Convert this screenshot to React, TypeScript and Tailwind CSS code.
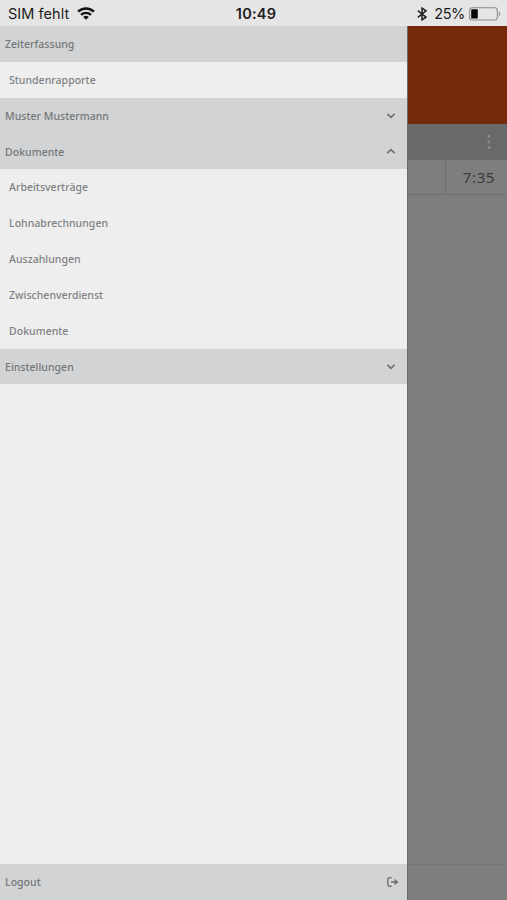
import { useState } from "react";

type Section = {
  id: string;
  label: string;
  collapsible?: boolean;
  items: string[];
};

const SECTIONS: Section[] = [
  { id: "time", label: "Zeiterfassung", items: ["Stundenrapporte"] },
  { id: "profile", label: "Muster Mustermann", collapsible: true, items: [] },
  {
    id: "documents",
    label: "Dokumente",
    collapsible: true,
    items: [
      "Arbeitsverträge",
      "Lohnabrechnungen",
      "Auszahlungen",
      "Zwischenverdienst",
      "Dokumente",
    ],
  },
  { id: "settings", label: "Einstellungen", collapsible: true, items: [] },
];

function WifiIcon() {
  return (
    <svg className="ml-[7.5px] h-[13px] w-[18px]" viewBox="0 0 18 13" fill="none" stroke="#111" aria-hidden>
      <path d="M1.1 4.7a11.4 11.4 0 0 1 15.8 0" strokeWidth="2.5" />
      <path d="M4 7.9a7.3 7.3 0 0 1 10 0" strokeWidth="2.4" />
      <path d="M9 12.8 6.2 10a4 4 0 0 1 5.6 0z" fill="#111" stroke="none" />
    </svg>
  );
}

function BluetoothIcon() {
  return (
    <svg className="h-[14px] w-[10px]" viewBox="0 0 10 14" fill="none" stroke="#222" strokeWidth="1.5" aria-hidden>
      <path d="M.9 3.7 9 10.2 5 12.9V1.1l4 2.7-8.1 6.5" />
    </svg>
  );
}

function BatteryIcon() {
  return (
    <svg className="ml-1 h-[14px] w-[32px]" viewBox="0 0 32 14" fill="none" aria-hidden>
      <rect x=".7" y=".8" width="27.6" height="12.2" rx="2.4" stroke="#8b8b8b" strokeWidth="1.1" />
      <rect x="2.2" y="2.3" width="6.6" height="9.2" rx=".8" fill="#080808" />
      <path d="M29.9 4.7c1.6.5 1.6 4 0 4.5z" fill="#8b8b8b" />
    </svg>
  );
}

function Chevron({ up }: { up: boolean }) {
  return (
    <svg className="h-[6px] w-[10px]" viewBox="0 0 10 6" fill="none" stroke="#707274" strokeWidth="1.8" aria-hidden>
      <path d={up ? "M1.4 5.2 5 1.7 8.6 5.2" : "M1.4 .8 5 4.3 8.6 .8"} />
    </svg>
  );
}

function LogoutIcon() {
  return (
    <svg className="h-[10px] w-[12px]" viewBox="0 0 12 10" fill="none" stroke="#707274" strokeWidth="1.4" aria-hidden>
      <path d="M4.6.8H2.4C1.4.8.8 1.4.8 2.4v5.2c0 1 .6 1.6 1.6 1.6h2.2" />
      <path d="M4.1 5h5" strokeWidth="1.7" />
      <path d="M7.6 1.7 11.6 5 7.6 8.3z" fill="#707274" stroke="none" />
    </svg>
  );
}

function StatusBar() {
  return (
    <header className="grid h-[26px] shrink-0 grid-cols-[1fr_auto_1fr] items-center bg-[#e5e5e5] pt-px font-['Inter',sans-serif] text-[#1c1c1c]">
      <div className="flex items-center pl-2">
        <span className="text-[14.5px] tracking-[0.05px]">SIM fehlt</span>
        <WifiIcon />
      </div>
      <span className="pl-[5px] text-[14.5px] font-semibold tracking-[0.2px]">10:49</span>
      <div className="flex items-center justify-end pr-[6px]">
        <BluetoothIcon />
        <span className="ml-[7px] text-[14.5px] tracking-[-0.35px]">25%</span>
        <BatteryIcon />
      </div>
    </header>
  );
}

export default function App() {
  const [open, setOpen] = useState<Record<string, boolean>>({ documents: true });

  return (
    <div className="flex h-[900px] w-[507px] flex-col overflow-hidden bg-[#7e7e7e] font-['Noto_Sans','Open_Sans',sans-serif]">
      <StatusBar />
      <div className="flex min-h-0 flex-1">
        <nav className="flex w-[407px] shrink-0 flex-col bg-[#eeeeee] text-[10.5px] font-medium tracking-[0.03px] text-[#7f8183]">
          {SECTIONS.map((section) => (
            <div key={section.id}>
              <button
                type="button"
                className="flex h-[35.85px] w-full items-center justify-between bg-[#d1d3d4] pr-[11px] pl-[5px] text-left text-[#75777a]"
                onClick={() => setOpen({ ...open, [section.id]: !open[section.id] })}
              >
                <span className="pt-[2.5px]">{section.label}</span>
                {section.collapsible && <Chevron up={!!open[section.id]} />}
              </button>
              {(!section.collapsible || open[section.id]) &&
                section.items.map((item) => (
                  <a key={item} className="flex h-[35.85px] items-center pt-[2px] pl-[9px]">
                    {item}
                  </a>
                ))}
            </div>
          ))}
          <button
            type="button"
            className="mt-auto flex h-9 items-center justify-between bg-[#d1d3d4] pr-[8.5px] pl-[5px] text-[#75777a]"
          >
            <span className="pt-[2px]">Logout</span>
            <LogoutIcon />
          </button>
        </nav>

        {/* dimmed page behind the drawer */}
        <main className="flex min-w-0 flex-1 flex-col border-l border-[#6c6c6c]">
          <div className="h-[98px] bg-[#73290a]" />
          <div className="flex h-9 items-center justify-end bg-[#68696a] pr-[16px]">
            <svg className="h-[14px] w-[4px]" viewBox="0 0 4 14" fill="#8a8a8a" aria-hidden>
              <rect x=".7" y="0" width="2.6" height="2.8" />
              <rect x=".7" y="5.6" width="2.6" height="2.8" />
              <rect x=".7" y="11.2" width="2.6" height="2.8" />
            </svg>
          </div>
          <div className="flex h-[35px] border-b border-[#6f6f6f]">
            <div className="w-[38px] border-r border-[#6f6f6f]" />
            <div className="flex flex-1 items-center justify-end pt-px pr-[12px] text-[15px] tracking-[0.6px] text-[#3c3c3c]">
              7:35
            </div>
          </div>
          <div className="mt-auto h-9 border-t border-[#767676]" />
        </main>
      </div>
    </div>
  );
}
